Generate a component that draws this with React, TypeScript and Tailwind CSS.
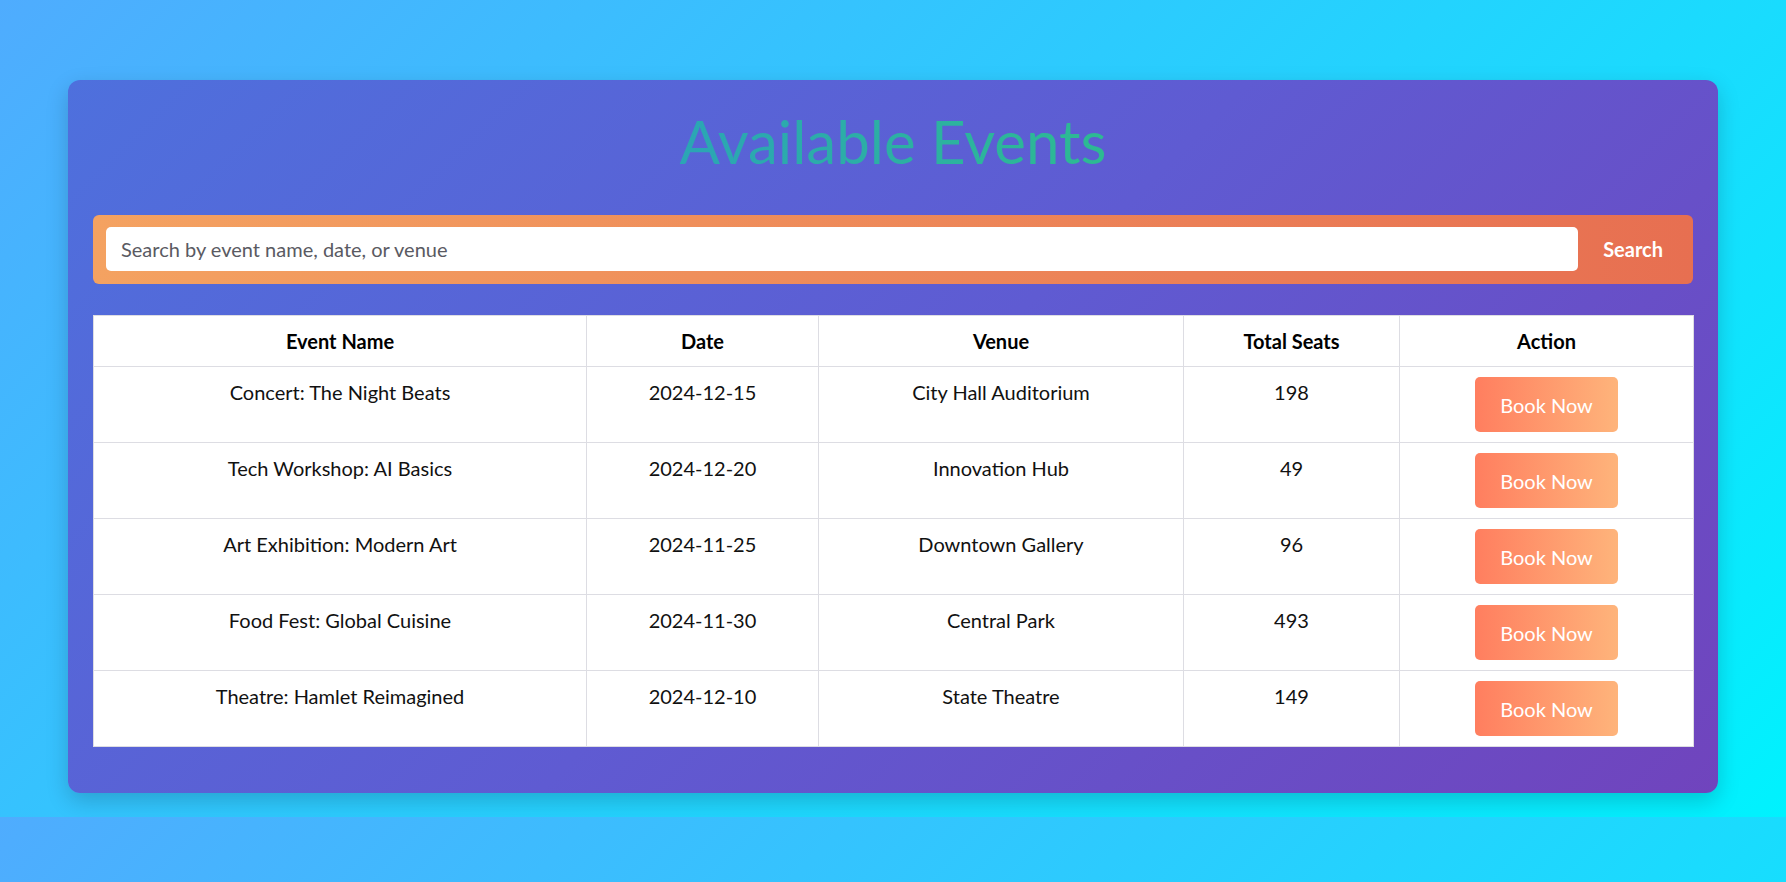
import React from "react";

const events = [
  { name: "Concert: The Night Beats", date: "2024-12-15", venue: "City Hall Auditorium", seats: 198 },
  { name: "Tech Workshop: AI Basics", date: "2024-12-20", venue: "Innovation Hub", seats: 49 },
  { name: "Art Exhibition: Modern Art", date: "2024-11-25", venue: "Downtown Gallery", seats: 96 },
  { name: "Food Fest: Global Cuisine", date: "2024-11-30", venue: "Central Park", seats: 493 },
  { name: "Theatre: Hamlet Reimagined", date: "2024-12-10", venue: "State Theatre", seats: 149 },
];

export default function App() {
  return (
    <div className="h-[882px] overflow-hidden font-['Lato','Liberation_Sans',sans-serif] text-[20px] leading-[1.5] text-[#111]">
      <div className="h-[817px] bg-[linear-gradient(135deg,#4facfe,#00f2fe)] pt-[80px]">
        <div className="mx-auto w-[1650px] rounded-[12px] bg-[linear-gradient(135deg,#4e70dd,#5f5bd2_50%,#7044bd)] px-[25px] pt-[25px] pb-[46px] shadow-[0_8px_22px_rgba(0,0,0,0.18)]">
          <div className="mb-[38px] flex justify-center">
            <h1 className="inline-block bg-[linear-gradient(to_right,#2ba5b5,#2dba92)] bg-clip-text text-[60px] font-normal leading-[72px] text-transparent">
              Available Events
            </h1>
          </div>
          <div className="mb-[31px] flex h-[69px] items-start rounded-[6px] bg-[linear-gradient(to_right,#f4a261,#e76f51)] pt-[12px] pr-[5px] pl-[13px]">
            <input
              type="text"
              placeholder="Search by event name, date, or venue"
              className="h-[44px] flex-1 rounded-[5px] border-0 bg-white px-[15px] text-[20px] text-[#333] outline-none placeholder:text-[#5a5a62]"
            />
            <button className="h-[44px] bg-transparent px-[25px] text-[20px] font-bold text-white">
              Search
            </button>
          </div>
          <table className="w-[1600px] table-fixed border-collapse bg-white">
            <colgroup>
              <col className="w-[493px]" />
              <col className="w-[232px]" />
              <col className="w-[365px]" />
              <col className="w-[216px]" />
              <col className="w-[294px]" />
            </colgroup>
            <thead>
              <tr>
                {["Event Name", "Date", "Venue", "Total Seats", "Action"].map((h) => (
                  <th key={h} className="border border-[#dddde3] p-[10px] text-center align-middle font-bold text-black">
                    {h}
                  </th>
                ))}
              </tr>
            </thead>
            <tbody>
              {events.map((e) => (
                <tr key={e.name}>
                  <td className="border border-[#dddde3] p-[10px] text-center align-top">{e.name}</td>
                  <td className="border border-[#dddde3] p-[10px] text-center align-top">{e.date}</td>
                  <td className="border border-[#dddde3] p-[10px] text-center align-top">{e.venue}</td>
                  <td className="border border-[#dddde3] p-[10px] text-center align-top">{e.seats}</td>
                  <td className="border border-[#dddde3] p-[10px] text-center align-top">
                    <button className="rounded-[5px] bg-[linear-gradient(to_right,#ff7e5f,#feb47b)] px-[25px] pt-[13px] pb-[12px] text-[20px] leading-[30px] text-white">
                      Book Now
                    </button>
                  </td>
                </tr>
              ))}
            </tbody>
          </table>
        </div>
      </div>
      <div className="h-[817px] bg-[linear-gradient(135deg,#4facfe,#00f2fe)]" />
    </div>
  );
}
